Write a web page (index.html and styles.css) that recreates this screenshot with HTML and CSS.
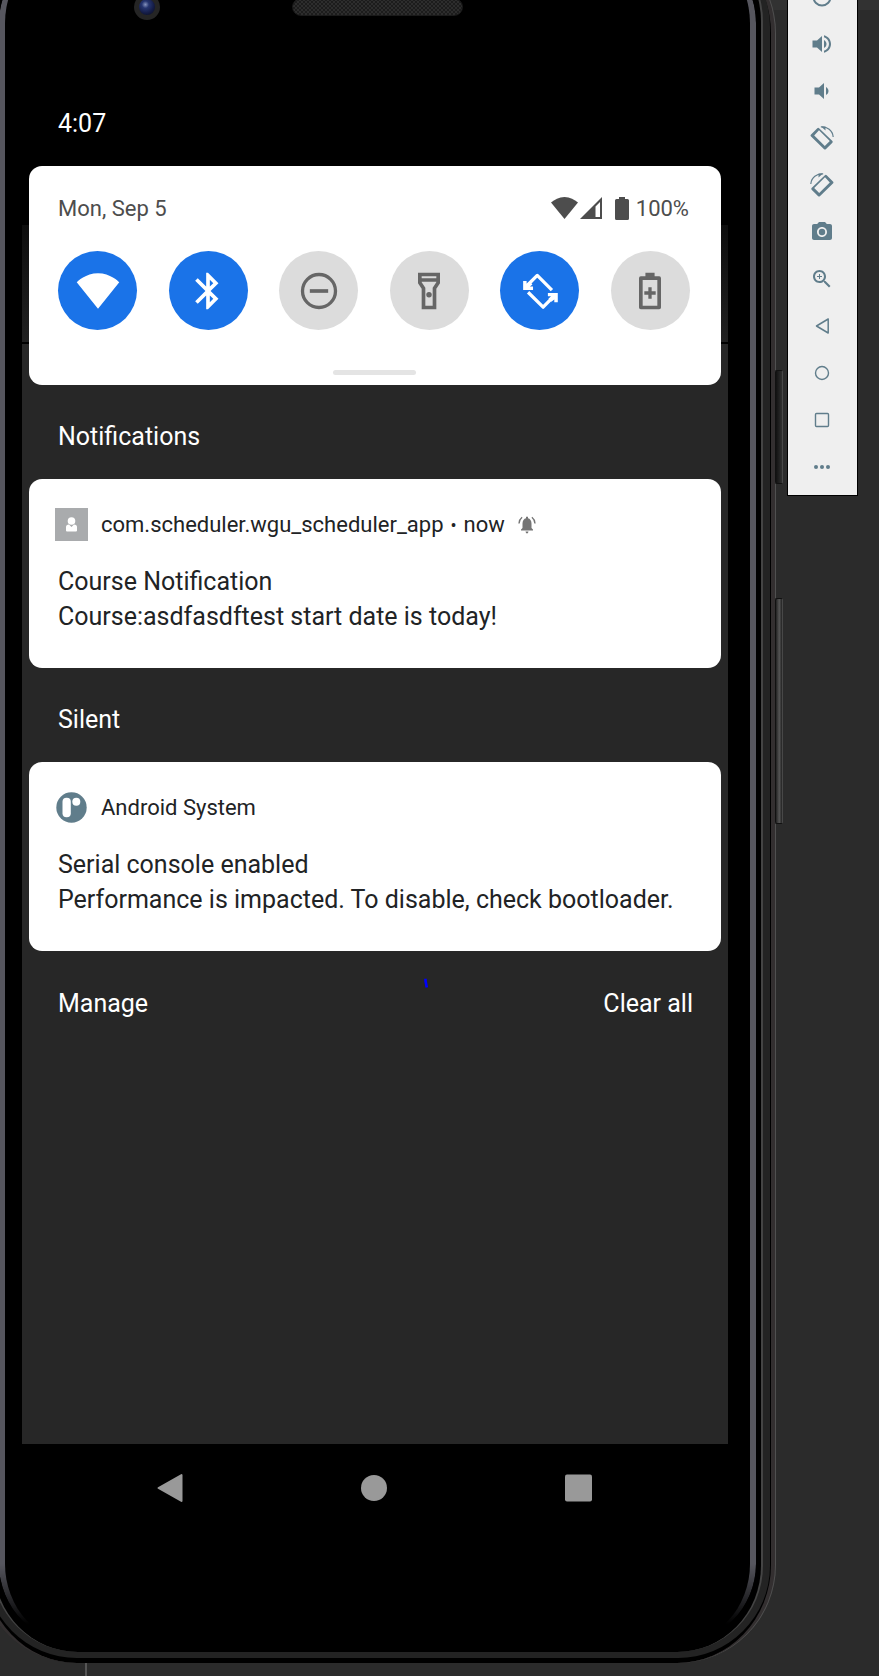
FILE: index.html
```html
<!DOCTYPE html>
<html lang="en">
<head>
<meta charset="utf-8">
<meta name="viewport" content="width=device-width, initial-scale=1">
<title>Android Emulator</title>
<link rel="stylesheet" href="styles.css">
</head>
<body>
<main class="frame">
  <span class="side-key side-key-power"></span>
  <span class="side-key side-key-volume"></span>
  <div class="rim">
    <div class="glass">
      <div class="sensors">
        <span class="camera"></span>
        <span class="speaker"></span>
      </div>
      <div class="status-bar">4:07</div>
      <div class="screen">
        <section class="card quick">
          <div class="quick-head">
            <span>Mon, Sep 5</span>
            <span class="status-icons">
              <svg width="27" height="22" viewBox="0 0 27 22"><path fill="#4d4d4d" d="M13.500 22L0 5.500C3.500 2.500 8 0 13.500 0S23.500 2.500 27 5.500z"/></svg>
              <svg class="signal" width="22" height="22" viewBox="0 0 22 22"><path fill="#4d4d4d" fill-rule="evenodd" d="M22 0v22H0zM15.500 9.500v10.500h4.500V5z"/></svg>
              <svg class="battery" width="14" height="23" viewBox="0 0 14 23"><path fill="#4d4d4d" d="M4 0h6v2h2.500Q14 2 14 3.500v18q0 1.500-1.500 1.500h-11Q0 23 0 21.500v-18Q0 2 1.500 2H4z"/></svg>
              <span>100%</span>
            </span>
          </div>
          <div class="tiles">
            <button class="tile on" aria-label="Wi-Fi"><svg width="44" height="44" viewBox="0 0 24 24"><path fill="currentColor" d="M12 21.700L.4 7.200C.8 6.800 5.300 2.300 12 2.300S23.200 6.800 23.600 7.200z"/></svg></button>
            <button class="tile on" aria-label="Bluetooth"><svg width="44" height="44" viewBox="0 0 24 24"><path fill="currentColor" d="M17.710 7.710L12 2h-1v7.590L6.410 5 5 6.410 10.590 12 5 17.590 6.410 19 11 14.410V22h1l5.710-5.710-4.300-4.290 4.300-4.290zM13 5.830l1.880 1.880L13 9.590V5.830zm1.880 10.460L13 18.170v-3.760l1.880 1.880z"/></svg></button>
            <button class="tile" aria-label="Do not disturb"><svg width="44" height="44" viewBox="0 0 24 24"><circle cx="12" cy="12" r="9" fill="none" stroke="currentColor" stroke-width="1.800"/><path fill="currentColor" d="M7 11h10v2H7z"/></svg></button>
            <button class="tile" aria-label="Flashlight"><svg width="44" height="44" viewBox="0 0 24 24"><path fill="none" stroke="currentColor" stroke-width="2" d="M7 3h10v4.500l-2 3V21H9V10.500l-2-3zM7 6h10"/><circle cx="12" cy="14" r="1.500" fill="currentColor"/></svg></button>
            <button class="tile on" aria-label="Auto-rotate"><svg width="44" height="44" viewBox="0 0 24 24"><path fill="none" stroke="currentColor" stroke-width="1.800" stroke-linejoin="round" d="M5 9L10.500 3.500l8 8M5.500 12.700l8.200 8.100 5.800-5.900"/><path fill="currentColor" d="M2.800 6.500h1.900v1.500l1.600-1.200 1.600 1.700L6.500 9.600H8.200v1.800H2.800zM21.700 18.200h-1.900v-1.500l-1.600 1.200-1.600-1.700 1.400-1.300h-1.700v-1.800h5.400z"/></svg></button>
            <button class="tile" aria-label="Battery saver"><svg width="44" height="44" viewBox="0 0 24 24"><path fill="none" stroke="currentColor" stroke-width="2" stroke-linejoin="round" d="M7 5h10v16H7z"/><path fill="currentColor" d="M9.500 2h5v3h-5zM11.100 10h1.800v2.200h2.200v1.800h-2.200v2.200h-1.800V14H8.900v-1.800h2.200z"/></svg></button>
          </div>
          <div class="handle"></div>
        </section>

        <h2 class="section-title">Notifications</h2>
        <article class="card note">
          <header class="note-head">
            <svg width="33" height="33" viewBox="0 0 33 33"><path fill="#a9abad" d="M0 0h33v33H0z"/><circle cx="16.500" cy="13" r="3.800" fill="#fff"/><path fill="#fff" d="M11 19q0-2.500 3-2.500l2.500 2.500 2.500-2.500q3 0 3 2.500v3.500q0 1-1 1H12q-1 0-1-1z"/></svg>
            <span class="note-app">com.scheduler.wgu_scheduler_app<span class="dot">•</span>now</span>
            <svg width="18" height="18" viewBox="0 0 18 18"><path fill="#757575" d="M3 14.500v-1L4.500 12V7.500C4.500 4.500 6 2.800 8 2.300V.8h2v1.500c2 .5 3.500 2.200 3.500 5.200V12l1.500 1.500v1zM7.500 15.500h3q-.3 2-1.500 2t-1.500-2z"/><path fill="none" stroke="#757575" stroke-width="1.400" d="M1 7.500Q1.300 3.500 4.100 1.300M17 7.500Q16.700 3.500 13.900 1.300"/></svg>
          </header>
          <p>Course Notification</p>
          <p>Course:asdfasdftest start date is today!</p>
        </article>

        <h2 class="section-title">Silent</h2>
        <article class="card note">
          <header class="note-head">
            <svg width="33" height="33" viewBox="0 0 33 33"><circle cx="16.500" cy="16.500" r="15.200" fill="#607d8b"/><rect x="7.500" y="6.700" width="8.300" height="19.500" rx="4" fill="#fff"/><circle cx="21.300" cy="10.800" r="4" fill="#fff"/></svg>
            <span class="note-app">Android System</span>
          </header>
          <p>Serial console enabled</p>
          <p>Performance is impacted. To disable, check bootloader.</p>
        </article>

        <div class="shade-footer">
          <button>Manage</button>
          <button>Clear all</button>
          <svg class="pen-mark" width="6" height="10" viewBox="0 0 6 10"><path fill="none" stroke="#00f" stroke-width="2.600" d="M2.500.8v2L3.800 9.500"/></svg>
        </div>
      </div>
      <nav class="nav-bar">
        <button aria-label="Back"><svg width="26" height="30" viewBox="0 0 26 30"><path fill="#999" stroke="#999" stroke-width="2" stroke-linejoin="round" d="M24.500 2v26L1.500 15z"/></svg></button>
        <button aria-label="Home"><svg width="28" height="30" viewBox="0 0 28 30"><circle cx="14" cy="15" r="13" fill="#999"/></svg></button>
        <button aria-label="Overview"><svg width="27" height="30" viewBox="0 0 27 30"><rect y="1.500" width="27" height="27" rx="2" fill="#999"/></svg></button>
      </nav>
    </div>
  </div>
</main>

<aside class="toolbar">
  <button aria-label="Power"><svg width="24" height="24" viewBox="0 0 24 24"><circle cx="12" cy="12" r="8.500" fill="none" stroke="currentColor" stroke-width="2"/></svg></button>
  <button aria-label="Volume up"><svg width="24" height="24" viewBox="0 0 24 24"><path fill="currentColor" d="M2.500 8.500v7h4.500l5 4.500V4L7 8.500H2.500zm14 3.500c0-1.770-1.020-3.290-2.500-4.030v8.050c1.480-.73 2.500-2.250 2.500-4.020zM14 3.230v2.060c2.890.86 5 3.540 5 6.710s-2.110 5.850-5 6.710v2.060c4.010-.91 7-4.490 7-8.770s-2.990-7.860-7-8.770z"/></svg></button>
  <button aria-label="Volume down"><svg width="24" height="24" viewBox="0 0 24 24"><path fill="currentColor" d="M18.500 12c0-1.770-1.020-3.290-2.500-4.030v8.050c1.480-.73 2.500-2.250 2.500-4.020zM4.500 8.500v7H9l5 4.500V4L9 8.500H4.500z"/></svg></button>
  <button aria-label="Rotate left"><svg width="24" height="24" viewBox="0 0 24 24"><path fill="currentColor" fill-rule="evenodd" d="M.8 8.700L7.300 2.200q.9-.7 1.800 0L22.400 15q.7.800 0 1.700l-6.600 6.500q-.9.700-1.700 0L.8 10.300q-.6-.8 0-1.600zM4.200 9.500l10.600 10.500 5-5L9 4.200z"/><path fill="none" stroke="currentColor" stroke-width="1.200" d="M10.800 1C17 .3 22.700 4.500 23.200 11"/><path fill="currentColor" d="M11 .6h4.500v4z"/></svg></button>
  <button aria-label="Rotate right"><svg width="24" height="24" viewBox="0 0 24 24"><g transform="matrix(-1 0 0 1 24 0)"><path fill="currentColor" fill-rule="evenodd" d="M.8 8.700L7.300 2.200q.9-.7 1.800 0L22.400 15q.7.800 0 1.700l-6.600 6.500q-.9.700-1.700 0L.8 10.300q-.6-.8 0-1.600zM4.200 9.500l10.600 10.500 5-5L9 4.200z"/><path fill="none" stroke="currentColor" stroke-width="1.200" d="M10.800 1C17 .3 22.700 4.500 23.200 11"/><path fill="currentColor" d="M11 .6h4.500v4z"/></g></svg></button>
  <button aria-label="Take screenshot"><svg width="24" height="24" viewBox="0 0 24 24"><circle cx="12" cy="12" r="3.200" fill="currentColor"/><path fill="currentColor" d="M9 2L7.170 4H4c-1.100 0-2 .9-2 2v12c0 1.100.9 2 2 2h16c1.100 0 2-.9 2-2V6c0-1.100-.9-2-2-2h-3.170L15 2H9zm3 15c-2.760 0-5-2.240-5-5s2.240-5 5-5 5 2.240 5 5-2.240 5-5 5z"/></svg></button>
  <button aria-label="Zoom"><svg width="24" height="24" viewBox="0 0 24 24"><path fill="currentColor" d="M15.500 14h-.79l-.28-.27C15.410 12.590 16 11.110 16 9.500 16 5.910 13.090 3 9.500 3S3 5.910 3 9.500 5.910 16 9.500 16c1.610 0 3.090-.59 4.230-1.570l.27.28v.79l5 4.990L20.490 19l-4.990-5zm-6 0C7.010 14 5 11.990 5 9.500S7.010 5 9.500 5 14 7.010 14 9.500 11.990 14 9.500 14zM12 10h-2v2H9v-2H7V9h2V7h1v2h2v1z"/></svg></button>
  <button aria-label="Back"><svg width="24" height="24" viewBox="0 0 24 24"><path fill="none" stroke="currentColor" stroke-width="1.500" stroke-linejoin="round" d="M18.200 5v14L6.500 12z"/></svg></button>
  <button aria-label="Home"><svg width="24" height="24" viewBox="0 0 24 24"><circle cx="12" cy="12" r="6.500" fill="none" stroke="currentColor" stroke-width="1.400"/></svg></button>
  <button aria-label="Overview"><svg width="24" height="24" viewBox="0 0 24 24"><rect x="5.500" y="5.500" width="13" height="13" rx="1" fill="none" stroke="currentColor" stroke-width="1.400"/></svg></button>
  <button aria-label="More"><svg width="24" height="24" viewBox="0 0 24 24"><g fill="currentColor"><circle cx="6" cy="12" r="2"/><circle cx="12" cy="12" r="2"/><circle cx="18" cy="12" r="2"/></g></svg></button>
</aside>
</body>
</html>
```

FILE: styles.css
```css
* {
  box-sizing: border-box;
}

body {
  margin: 0;
  min-height: 100vh;
  padding: 0 21px 13px 0;
  display: flex;
  align-items: flex-start;
  gap: 12px;
  overflow: hidden;
  background:
    linear-gradient(#555, #555) 85px 100% / 2px 13px no-repeat,
    linear-gradient(#323232, #323232) 0 0 / 100% 10px no-repeat,
    #2b2b2b;
  font-family: Roboto, "Liberation Sans", sans-serif;
  color: #212325;
}

button {
  border: 0;
  padding: 0;
  background: none;
  font: inherit;
  color: inherit;
}

svg {
  display: block;
  flex: none;
}

/* Phone body */
.frame {
  position: relative;
  flex: 1;
  align-self: stretch;
  display: flex;
  margin: -65px 0 0 -21px;
  padding: 0 1px 5px;
  border: 0 solid #332f30;
  border-width: 0 4px 0 5px;
  border-radius: 98px;
  background: #000;
  box-shadow: 1px 0 0 #505050;
}

.rim {
  flex: 1;
  display: flex;
  padding: 0 7px 6px;
  border-radius: 92px;
  background: #232323;
}

.glass {
  position: relative;
  flex: 1;
  display: flex;
  flex-direction: column;
  border: 0 solid #444;
  border-width: 0 2px;
  border-radius: 86px;
  background: #000;
}

/* Light reflected by the curved glass edge */
.glass::before {
  content: "";
  position: absolute;
  inset: 8px 5px;
  border: 0 solid #56565e;
  border-width: 0 6px;
  border-radius: 80px;
  pointer-events: none;
  mask-image: linear-gradient(#000 calc(100% - 80px), transparent calc(100% - 20px));
}

.side-key {
  position: absolute;
  right: -12px;
  width: 8px;
  border: 1px solid #111;
  border-right-color: #484848;
  border-radius: 2px;
}

.side-key-power {
  top: 435px;
  height: 114px;
  background: linear-gradient(90deg, #111, #303030);
}

.side-key-volume {
  top: 663px;
  height: 226px;
  background: linear-gradient(90deg, #222, #555 55%, #222);
}

.sensors {
  display: grid;
  grid-template-columns: 1fr auto 1fr;
  align-items: center;
  padding-top: 59px;
}

.camera {
  width: 26px;
  height: 26px;
  margin-left: 140px;
  border: 5px solid #252525;
  border-radius: 50%;
  background: radial-gradient(circle at 40% 35%, #8592bd 0, #26356f 25%, #141c46 60%, #0a0c18);
}

.speaker {
  width: 171px;
  height: 18px;
  border: 1px solid #1a1a1a;
  border-radius: 9px;
  background: repeating-conic-gradient(#2d2d2d 0 25%, #1c1c1c 0 50%) 0 0 / 4px 4px;
}

.status-bar {
  padding: 90px 64px 28px;
  font-size: 25px;
  line-height: 28px;
  color: #fff;
}

/* Notification shade */
.screen {
  flex: 1;
  margin: 0 33px 0 28px;
  padding: 0 7px;
  background:
    linear-gradient(#000 59px, #0d0d0d 59px, #212121 176px, #000 176px, #000 178px, #272727 178px);
}

.card {
  border-radius: 13px;
  background: #fff;
}

.quick {
  padding: 29px 31px 10px 29px;
}

.quick-head {
  display: flex;
  justify-content: space-between;
  align-items: center;
  height: 26px;
  font-size: 22px;
  color: #4d4d4d;
}

.status-icons {
  display: flex;
  align-items: center;
  padding-right: 1px;
}

.signal {
  margin-left: 2px;
}

.battery {
  margin: 0 7px 0 13px;
}

.tiles {
  display: flex;
  justify-content: space-between;
  margin-top: 30px;
}

.tile {
  display: grid;
  place-items: center;
  width: 79px;
  height: 79px;
  border-radius: 50%;
  background: #dcdcdc;
  color: #666;
}

.tile.on {
  background: #1a73e8;
  color: #fff;
}

.handle {
  width: 83px;
  height: 5px;
  margin: 40px auto 0;
  border-radius: 3px;
  background: #e4e4e4;
}

.section-title {
  margin: 0;
  padding: 37px 29px 27px;
  font-size: 25px;
  font-weight: 400;
  line-height: 30px;
  color: #fff;
}

.note {
  padding: 29px 29px 34px;
  font-size: 25px;
  line-height: 35px;
}

.note p {
  margin: 0;
}

.note-head {
  display: flex;
  align-items: center;
  gap: 13px;
  height: 33px;
  margin: 0 0 23px -3px;
  font-size: 22px;
}

.dot {
  margin: 0 7px;
  font-size: 18px;
}

.shade-footer {
  position: relative;
  display: flex;
  justify-content: space-between;
  padding: 38px 28px 38px 29px;
  font-size: 25px;
  line-height: 30px;
  color: #fff;
}

.pen-mark {
  position: absolute;
  top: 27px;
  left: 57%;
}

.nav-bar {
  display: flex;
  justify-content: space-between;
  padding: 29px 169px 149px 163px;
}

/* Emulator controls */
.toolbar {
  display: flex;
  flex-direction: column;
  width: 71px;
  margin-top: -28px;
  padding: 0 2px 5px 0;
  border: 1px solid #000;
  background: #efefef;
  color: #607d8b;
}

.toolbar button {
  display: grid;
  place-items: center;
  height: 47px;
}
```
